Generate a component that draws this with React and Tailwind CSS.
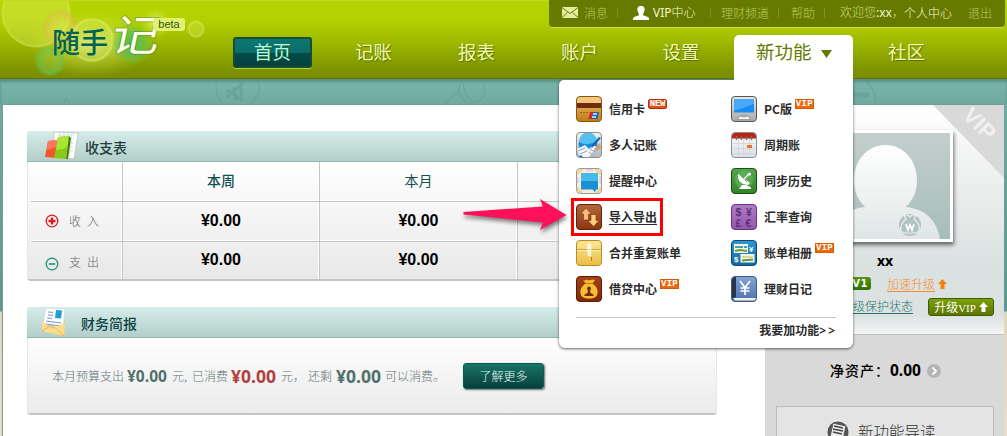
import React from 'react';

const CJK = "font-['Noto_Sans_CJK_SC',sans-serif]";

function Tile({ id, from, to, stroke, children }) {
  return (
    <svg width="26" height="26" viewBox="0 0 26 26" className="block shrink-0">
      <defs>
        <linearGradient id={id} x1="0" y1="0" x2="0" y2="1">
          <stop offset="0" stopColor={from} />
          <stop offset="1" stopColor={to} />
        </linearGradient>
        <clipPath id={id + '-clip'}>
          <rect x="1" y="1" width="24" height="24" rx="3" />
        </clipPath>
      </defs>
      <rect x="0.5" y="0.5" width="25" height="25" rx="3.5" fill={`url(#${id})`} />
      <g clipPath={`url(#${id}-clip)`}>{children}</g>
      <rect x="0.5" y="0.5" width="25" height="25" rx="3.5" fill="none" stroke={stroke} />
    </svg>
  );
}

const icons = {
  card: (
    <Tile id="card" from="#f3c777" to="#bd7b10" stroke="#8a5605">
      <rect width="26" height="7" fill="#f2c881" />
      <rect y="7" width="26" height="5" fill="#6d2c12" />
      <path d="M4 16.500h2M7 16.500h2M10 16.500h2" stroke="#94640f" />
      <path d="M14 16h5l-1.500 7h-5z" fill="#d8232a" />
      <path d="M17 16h6l-1.500 7h-6z" fill="#1c5fb4" />
      <path d="M17 18h4M16 21h4" stroke="#dff3fb" strokeWidth="1.500" />
    </Tile>
  ),
  people: (
    <Tile id="people" from="#f2f2f0" to="#a8bac3" stroke="#8e8e8e">
      <circle cx="12" cy="12" r="9.500" fill="#188bdc" />
      <path d="M3 10a9 9 0 0 1 18-1q-9 6-18 1" fill="#55c0ef" />
      <path d="M1 17l8-4 4 4 4-4 4 2-8 10H4z" fill="#f3f6f8" />
      <path d="M2 19l7-3M4 22l7-3M14 17l5 3M13 20l4 3" stroke="#8ea3b3" />
      <path d="M25 6l-8 9-2 1 1-3 7-8z" fill="#1a5fa5" />
      <path d="M24 11l-6 6 3 2 4-3z" fill="#d99c6c" />
      <path d="M2 25l3-2 2 2" fill="#287db8" />
    </Tile>
  ),
  remind: (
    <Tile id="remind" from="#fbf1e5" to="#f4ead7" stroke="#9a9a9a">
      <path d="M1 6l6-5M19 1l6 5M1 20l5 5M20 25l5-5" stroke="#f6d48e" strokeWidth="2.500" />
      <path d="M1.500 9v6M24.500 8v8M10 2h7" stroke="#e2cdee" strokeWidth="2.500" />
      <path d="M5 5h17v16.500h-2l-1 2.500-2.500-2.500H5z" fill="#1a91d4" />
      <path d="M5 5h17v8H5z" fill="#46b9e9" />
    </Tile>
  ),
  swap: (
    <Tile id="swap" from="#b4673c" to="#8a3510" stroke="#5e240b">
      <path d="M10 4l5.500 6h-3v6h-5v-6h-3z" fill="#f5bd74" stroke="#7b3414" strokeWidth=".6" />
      <path d="M17.500 22.500l-5.500-6h3v-6h5v6h3z" fill="#fbd07c" stroke="#7b3414" strokeWidth=".6" />
    </Tile>
  ),
  merge: (
    <Tile id="merge" from="#fbe898" to="#ebbc45" stroke="#b98d1d">
      <path d="M1 9.500h24" stroke="#cfa53b" />
      <path d="M1 10.500h24" stroke="#fff2b9" />
      <path d="M12 4.500h2.500v3H12zM12 8.500h2.500v3H12zM12.500 12h2v3.500h-2z" fill="none" stroke="#fffef0" strokeWidth="1.300" />
      <path d="M15.500 17v4" stroke="#ad8526" />
    </Tile>
  ),
  loan: (
    <Tile id="loan" from="#a54218" to="#822704" stroke="#5b1c06">
      <path d="M7 4q2 1 3-.5 3 1.500 6 0l3 .500-2.500 3.500h-7z" fill="#f3b82b" />
      <path d="M9 8h8c3 2 5 5 4.500 9s-3 5.500-8.500 5.500S5 21 4.500 17 6 10 9 8z" fill="#f5bf31" />
      <circle cx="13" cy="12.500" r="1.900" fill="#752d09" />
      <path d="M12 13h2l.5 4 3 1.500v1.500h-9v-1.500l3-1.500z" fill="#752d09" />
    </Tile>
  ),
  pc: (
    <Tile id="pc" from="#e8e8e8" to="#a9a9a9" stroke="#555">
      <rect x="3" y="3" width="20" height="13.500" fill="#168cf4" />
      <path d="M3 3h20v5L3 15z" fill="#4aa8f8" />
      <path d="M7 23.500q0-3 3-3.500h6q3 .5 3 3.500z" fill="#f7f7f7" stroke="#888" strokeWidth=".7" />
      <path d="M10 20q3 2 6 0" fill="none" stroke="#888" strokeWidth=".8" />
    </Tile>
  ),
  calendar: (
    <Tile id="calendar" from="#fcfcfc" to="#d9dde2" stroke="#8290a2">
      <rect width="26" height="6.500" fill="#b92514" />
      <path d="M2 11.500h22M2 16.500h22M2 21.500h22M7.500 8v15M12.500 8v15M18.500 8v15" stroke="#cfd2d7" strokeWidth=".8" />
      <path d="M5.500 4v4M10.500 4v4M15.500 4v4M20.500 4v4" stroke="#7a6b6b" strokeWidth="1.500" />
      <rect x="16" y="13" width="5" height="3" fill="#ef7421" />
    </Tile>
  ),
  sync: (
    <Tile id="sync" from="#53a84e" to="#328229" stroke="#174f14">
      <circle cx="13" cy="12" r="9" fill="#68b75f" opacity=".6" />
      <path d="M7 6q-1 10 10 11l2-2z" fill="#fff" />
      <path d="M10 8l6 6M13 10l5-5" stroke="#79ad70" strokeWidth="1" />
      <path d="M13 11l5-5" stroke="#fff" strokeWidth="1.200" />
      <circle cx="18.500" cy="6" r="1.500" fill="#fff" />
      <path d="M11 17l-3 4h12v-1.500l-5-2.500z" fill="#fff" />
    </Tile>
  ),
  rate: (
    <Tile id="rate" from="#b17bc5" to="#9456ae" stroke="#62377c">
      <g fill="#5d2f79" fontSize="10.500" fontWeight="bold" fontFamily="Liberation Sans">
        <text x="4.500" y="11.500">$</text>
        <text x="15" y="11.500">¥</text>
        <text x="4.500" y="22.500">£</text>
        <text x="14.500" y="22.500">€</text>
      </g>
    </Tile>
  ),
  album: (
    <Tile id="album" from="#2c9ad3" to="#1469a6" stroke="#0a4775">
      <rect x="3" y="4" width="14" height="9" fill="#f6f5e8" />
      <rect x="9.500" y="14" width="14" height="8.500" fill="#f6f5e8" />
      <path d="M4 7h8M13 7h3" stroke="#48a0b8" strokeWidth="2" />
      <path d="M4 11l5-1 7 1" stroke="#739b36" strokeWidth="2" />
      <path d="M11 17h11" stroke="#e1d38b" strokeWidth="2" />
      <path d="M11 20.500l11-1" stroke="#579650" strokeWidth="2" />
      <text x="18" y="12" fill="#fff" fontSize="8" fontWeight="bold" fontFamily="Liberation Sans">¥</text>
      <text x="3" y="22" fill="#fff" fontSize="8" fontWeight="bold" fontFamily="Liberation Sans">$</text>
    </Tile>
  ),
  diary: (
    <Tile id="diary" from="#83a5d4" to="#4c73ab" stroke="#435d87">
      <path d="M0 0h5v21l-4 2z" fill="#26364c" />
      <path d="M2 22h23v2.500H4z" fill="#f2f1ea" />
      <path d="M9 5l5 6.500L19 5M14 11v8M9.500 12h9M9.500 15h9" fill="none" stroke="#fff" strokeWidth="1.700" />
    </Tile>
  ),
};

function Tag({ kind }) {
  if (kind === 'NEW') {
    return (
      <span className="ml-[3px] mt-[3px] flex h-[10px] w-[19px] items-center justify-center rounded-[2px] border border-[#b92c0c] bg-[#e0511c] font-['Liberation_Mono',monospace] text-[9px] leading-[8px] font-bold tracking-[-0.2px] text-white">
        NEW
      </span>
    );
  }
  return (
    <span className="ml-[3px] mt-[3px] flex h-[10px] w-[19px] items-center justify-center border border-[#d55a09] bg-[#ea6a0c] font-['Liberation_Mono',monospace] text-[9px] leading-[8px] font-bold tracking-[0.3px] text-white">
      VIP
    </span>
  );
}

function MenuItem({ icon, label, tag, underline }) {
  return (
    <div className="flex h-[26px]">
      {icons[icon]}
      <span
        className={`ml-[7px] h-[26px] text-[12px] leading-[25px] font-bold whitespace-nowrap text-[#2b2b2b] ${underline ? 'underline underline-offset-2' : ''}`}
      >
        {label}
      </span>
      {tag && <Tag kind={tag} />}
    </div>
  );
}

const menuLeft = [
  { icon: 'card', label: '信用卡', tag: 'NEW' },
  { icon: 'people', label: '多人记账' },
  { icon: 'remind', label: '提醒中心' },
  { icon: 'swap', label: '导入导出', underline: true },
  { icon: 'merge', label: '合并重复账单' },
  { icon: 'loan', label: '借贷中心', tag: 'VIP' },
];

const menuRight = [
  { icon: 'pc', label: 'PC版', tag: 'VIP' },
  { icon: 'calendar', label: '周期账' },
  { icon: 'sync', label: '同步历史' },
  { icon: 'rate', label: '汇率查询' },
  { icon: 'album', label: '账单相册', tag: 'VIP' },
  { icon: 'diary', label: '理财日记' },
];

function Dropdown() {
  return (
    <div className="absolute top-[80px] left-[559px] z-20 flex h-[268px] w-[294px] flex-col rounded-b-[6px] rounded-tl-[5px] bg-white px-[17px] pt-[16px] shadow-[0_1px_3px_rgba(0,0,0,0.6)]">
      <div className="flex h-[222px] border-b border-[#c5c5c5]">
        <div className="flex w-[155px] flex-col gap-[10px]">
          {menuLeft.map((m) => <MenuItem key={m.label} {...m} />)}
        </div>
        <div className="flex flex-col gap-[10px]">
          {menuRight.map((m) => <MenuItem key={m.label} {...m} />)}
        </div>
      </div>
      <div className="text-right text-[12px] leading-[23px] font-bold text-[#2b2b2b]">
        我要加功能<span className="font-['Noto_Sans'] tracking-[2px] font-semibold">&gt;</span><span className="font-['Noto_Sans'] tracking-[1px] font-semibold">&gt;</span>
      </div>
    </div>
  );
}

function Annotation() {
  return (
    <>
      <div className="absolute top-[198px] left-[571px] z-30 h-[38px] w-[92px] border-[3px] border-[#fe0000]" />
      <svg className="absolute top-[194px] left-[458px] z-30 overflow-visible drop-shadow-[1px_3px_2px_rgba(0,0,0,0.5)]" width="112" height="42">
        <path d="M5.500 18L85 12.500 82 5l26.500 16L82 36l3-7.500L5.500 20.500z" fill="#ff1059" />
      </svg>
    </>
  );
}

function Logo() {
  return (
    <div className="relative h-[77px] w-[232px] shrink-0">
      <svg width="232" height="77" className="block">
        <defs>
          <radialGradient id="glow">
            <stop offset="0" stopColor="#effa9d" stopOpacity=".7" />
            <stop offset="1" stopColor="#d8ec35" stopOpacity="0" />
          </radialGradient>
          <radialGradient id="ringgreen">
            <stop offset=".2" stopColor="#9ed04b" stopOpacity=".35" />
            <stop offset=".75" stopColor="#6cc352" stopOpacity=".65" />
            <stop offset="1" stopColor="#6cc352" stopOpacity="0" />
          </radialGradient>
          <radialGradient id="discgreen">
            <stop offset="0" stopColor="#4dbb58" stopOpacity=".9" />
            <stop offset=".6" stopColor="#5dbd50" stopOpacity=".7" />
            <stop offset="1" stopColor="#6cc352" stopOpacity="0" />
          </radialGradient>
          <radialGradient id="ringorange">
            <stop offset=".2" stopColor="#ddea59" stopOpacity=".3" />
            <stop offset=".8" stopColor="#e2b94b" stopOpacity=".5" />
            <stop offset="1" stopColor="#e2b23b" stopOpacity="0" />
          </radialGradient>
        </defs>
        <circle cx="36" cy="12" r="33.500" fill="#e5f169" fillOpacity=".35" stroke="#e3ee69" strokeOpacity=".35" strokeWidth="2.500" />
        <ellipse cx="90" cy="43" rx="62" ry="34" fill="url(#glow)" />
        <circle cx="61" cy="27" r="19" fill="url(#ringorange)" />
        <circle cx="92" cy="39" r="20.500" fill="#e7f486" fillOpacity=".2" stroke="#e5f082" strokeOpacity=".45" strokeWidth="2.500" />
        <circle cx="50" cy="60" r="16" fill="url(#ringgreen)" />
        <circle cx="132" cy="43" r="21" fill="url(#discgreen)" />
        <circle cx="156" cy="22" r="16" fill="url(#glow)" />
        <circle cx="196" cy="28" r="7.500" fill="#dfef60" fillOpacity=".3" stroke="#e0ee67" strokeOpacity=".4" strokeWidth="2.500" />
        <text x="52" y="52" fill="#006256" fontSize="28" fontWeight="500" fontFamily="Noto Sans CJK SC" textLength="56">随手</text>
        <g transform="translate(109 50) skewX(-12) scale(1.120 1)">
          <text fill="#fdffe8" stroke="#39763e" strokeOpacity=".4" strokeWidth="2" paintOrder="stroke" fontSize="43" fontWeight="400" fontFamily="Noto Sans CJK SC">记</text>
        </g>
      </svg>
      <span className="absolute top-[17px] left-[153px] h-[13px] w-[32px] rounded-[3px] bg-[#e0f174] text-center font-['Liberation_Sans',sans-serif] text-[11px] leading-[13px] text-[#33560b]">
        beta
      </span>
    </div>
  );
}

function TopBar() {
  return (
    <div className="absolute -top-px left-[549px] flex h-[28px] w-[456px] items-center rounded-b-[4px] border-b border-[#cbe052] bg-[#667a00] pb-[2px] pl-[13px] text-[12px] leading-[24px] font-light whitespace-nowrap text-[#b9ca5e]">
      <svg width="16" height="11" viewBox="0 0 16 11" className="shrink-0">
        <rect width="16" height="11" fill="#e4ee9e" />
        <path d="M0 .5l8 6 8-6M0 10.500l5.500-5M16 10.500l-5.500-5" fill="none" stroke="#667a00" />
      </svg>
      <span className="ml-[6px] w-[33px]">消息</span>
      <span className="h-[10px] w-px bg-[#7f9127]" />
      <svg width="16" height="14" viewBox="0 0 16 14" className="ml-[15px] shrink-0">
        <path d="M8 0c3 0 4 2 3.500 4.500C11 6.500 10 7.500 10 9c1 1 5 1.500 6 3v2H0v-2c1-1.500 5-2 6-3 0-1.500-1-2.500-1.500-4.500C4 2 5 0 8 0z" fill="#fff" />
      </svg>
      <span className="ml-[4px] w-[57px] text-[#f3f8cd]"><span className="font-['Noto_Sans'] font-normal">VIP</span>中心</span>
      <span className="h-[10px] w-px bg-[#7f9127]" />
      <span className="ml-[10px] w-[57px]">理财频道</span>
      <span className="h-[10px] w-px bg-[#7f9127]" />
      <span className="ml-[12px] w-[33px]">帮助</span>
      <span className="h-[10px] w-px bg-[#7f9127]" />
      <span className="ml-[15px] w-[64px] text-[#cfdd7a]">欢迎您<span className="font-['Noto_Sans'] font-normal text-[#f3f8cd]">:xx</span>，</span>
      <span className="w-[64px] text-[#f3f8cd]">个人中心</span>
      <span>退出</span>
    </div>
  );
}

function Header() {
  return (
    <header className="relative z-30 flex h-[79px] shrink-0 border-t border-b border-t-[#bfd625] border-b-[#5d7000] bg-[linear-gradient(180deg,#b5d300_0%,#b3d100_25%,#a0bc00_50%,#7b9100_92%,#7b8e00_100%)]">
      <Logo />
      <TopBar />
      <nav className="flex items-start pt-[34px] text-[18.500px] leading-[32px] font-normal text-[#eff9b1] [text-shadow:1px_1px_1px_rgba(70,90,0,0.7)]">
        <div className="mt-[2px] mr-[11px] ml-px flex h-[31px] w-[79px] justify-center rounded-[3px] border-2 border-[#174e30] bg-[linear-gradient(180deg,#0d7772_0%,#0b6d69_50%,#024c4c_51%,#06403f_100%)] text-[#a8fff0] shadow-[0_1px_0_#b7cf3c]">
          <span className="h-[27px] leading-[25px]">首页</span>
        </div>
        <span className="w-[101px] text-center">记账</span>
        <span className="w-[105px] text-center">报表</span>
        <span className="w-[101px] text-center">账户</span>
        <span className="w-[102px] text-center">设置</span>
        <div className="ml-[2px] flex h-[46px] w-[119px] items-start rounded-t-[5px] bg-white pl-[22px] text-[#647900] [text-shadow:none]">
          <span className="leading-[32px]">新功能</span>
          <svg width="11" height="8" viewBox="0 0 11 8" className="ml-[9px] mt-[15px]"><path d="M0 0h11L5.500 8z" fill="#647900" /></svg>
        </div>
        <span className="w-[107px] text-center">社区</span>
      </nav>
    </header>
  );
}

function PanelHead({ icon, title, className }) {
  return (
    <div className="flex h-[31px] items-center rounded-t-[3px] border-b border-[#94b5b2] bg-[linear-gradient(180deg,#d5ece9,#b3cfca)]">
      {icon}
      <h2 className={`${className} text-[14px] leading-[30px] font-medium`}>{title}</h2>
    </div>
  );
}

const chartIcon = (
  <svg width="36" height="30" viewBox="0 0 36 30" className="ml-[16px] shrink-0">
    <path d="M11 1l24 1-4 26-20-2z" fill="#fff" stroke="#b4bdbc" strokeWidth=".7" />
    <path d="M14 4h18M14 8h17M14 12h17M27 16h3M26 20h4M17 2v8M21 2v8M25 2v8M29 2l-3 24" stroke="#cbd4d3" strokeWidth=".7" />
    <path d="M5 10l9-1-1 18-11-1z" fill="#f2552f" />
    <path d="M5 10l9-1-1 7-9 3z" fill="#ff785b" />
    <path d="M15 6l11-1-3 23-12-1z" fill="#87ca15" />
    <path d="M15 6l11-1-1 10q-5 4-12 4z" fill="#a9e534" />
    <path d="M26 5l2 2-3 21h-2z" fill="#437c0a" />
  </svg>
);

const mailIcon = (
  <svg width="26" height="30" viewBox="0 0 26 30" className="ml-[14px] shrink-0">
    <path d="M2 14L22 16l2-3-1 16L1 24z" fill="#eec269" />
    <path d="M5 1l19 1-2 20L2 17z" fill="#fff" stroke="#c8d5da" strokeWidth=".6" />
    <path d="M15 3l6 .5-1 8-6-.5z" fill="#1a9fd9" />
    <path d="M7 5l5 .4M7 8l5 .4M6 11l5 .4M5 14l15 2M5 17l14 2" stroke="#7694b8" />
    <path d="M1 14l10 7.500L24 16l-1 13L1 24z" fill="#fbdd8b" />
    <path d="M1 24l10-6 12 11" fill="none" stroke="#d6a850" strokeWidth=".8" />
  </svg>
);

const plusIcon = (
  <svg width="14" height="14" viewBox="0 0 14 14" className="mr-[10px]">
    <circle cx="7" cy="7" r="5.800" fill="none" stroke="#df1c20" strokeWidth="1.300" />
    <path d="M7 3.500v7M3.500 7h7" stroke="#df1c20" strokeWidth="2.400" />
  </svg>
);

const minusIcon = (
  <svg width="14" height="14" viewBox="0 0 14 14" className="mt-[5px] mr-[10px]">
    <circle cx="7" cy="7" r="5.800" fill="none" stroke="#19937e" strokeWidth="1.300" />
    <path d="M3.800 7h6.400" stroke="#19937e" strokeWidth="1.600" />
  </svg>
);

const rowLine = 'border-b border-[#c5c5c5] shadow-[inset_0_-1px_0_#fff]';
const cell = 'flex items-center justify-center border-l border-[#c5c5c5] pb-[2px] shadow-[-1px_0_0_#fff]';
const amount = "font-['Liberation_Sans',sans-serif] text-[16px] font-bold text-black";

function BalanceTable() {
  return (
    <section className="h-[150px] w-[690px] rounded-[4px] border-b-2 border-[#c3c3c3]">
      <PanelHead icon={chartIcon} title="收支表" className="ml-[6px] pt-[2px] text-[#26403e]" />
      <div className="h-[117px] border-x border-[#e5e5e5] bg-[linear-gradient(180deg,#fff,#e8e8e8)] pl-[3px]">
        <div className={`grid h-[40px] grid-cols-[91px_197px_198px_1fr] ${rowLine}`}>
          <span />
          <span className={`${cell} text-[14px] font-medium text-[#124f50]`}>本周</span>
          <span className={`${cell} text-[14px] font-normal text-[#124f50]`}>本月</span>
          <span className={cell} />
        </div>
        <div className={`grid h-[40px] grid-cols-[91px_197px_198px_1fr] ${rowLine}`}>
          <span className="flex items-center pb-[2px] pl-[14px] text-[12px] font-light text-[#666]">{plusIcon}收<span className="w-[6px]" />入</span>
          <span className={cell}><b className={amount}>¥0.00</b></span>
          <span className={cell}><b className={amount}>¥0.00</b></span>
          <span className={cell} />
        </div>
        <div className="grid h-[37px] grid-cols-[91px_197px_198px_1fr]">
          <span className="flex items-center pt-[2px] pl-[14px] text-[12px] font-light text-[#666]">{minusIcon}支<span className="w-[6px]" />出</span>
          <span className={cell}><b className={amount}>¥0.00</b></span>
          <span className={cell}><b className={amount}>¥0.00</b></span>
          <span className={cell} />
        </div>
      </div>
    </section>
  );
}

function Briefing() {
  return (
    <section className="mt-[26px] h-[108px] w-[690px] rounded-[4px] border-b-2 border-[#c3c3c3]">
      <PanelHead icon={mailIcon} title="财务简报" className="ml-[14px] pt-[2px] text-[#0d4544]" />
      <div className="flex h-[75px] items-center border-x border-[#e8e8e8] bg-[linear-gradient(180deg,#fefefe,#ebebeb)] pt-px pl-[24px] text-[12px] leading-[20px] font-light whitespace-nowrap text-[#627478]">
        <span className="w-[75px]">本月预算支出</span>
        <b className="w-[45px] font-['Open_Sans'] text-[15.500px] font-bold text-[#50706d]">¥0.00</b>
        <span className="w-[20px]">元,</span>
        <span className="w-[39px]">已消费</span>
        <b className="w-[50px] font-['Open_Sans'] text-[17.500px] font-bold text-[#b1413e]">¥0.00</b>
        <span className="w-[27px]">元，</span>
        <span className="w-[28px]">还剩</span>
        <b className="w-[49px] font-['Open_Sans'] text-[17.500px] font-bold text-[#50706d]">¥0.00</b>
        <span className="w-[78px]">可以消费。</span>
        <button className="h-[26px] w-[81px] rounded-[3px] border border-[#0b5951] bg-[linear-gradient(180deg,#187468,#083f3b)] text-[12px] leading-[24px] font-light text-[#e0f3ef] shadow-[1px_1px_2px_rgba(0,0,0,0.55)]">
          了解更多
        </button>
      </div>
    </section>
  );
}

function UpArrow({ fill }) {
  return (
    <svg width="9" height="10" viewBox="0 0 9 10" className="shrink-0">
      <path d="M4.500 0L9 5H6.500v5h-4V5H0z" fill={fill} />
    </svg>
  );
}

function Sidebar() {
  return (
    <aside className="relative flex w-[239px] shrink-0 flex-col bg-[#d9d9d9]">
      <div className="h-[230px] shrink-0 border-b border-[#c2c2c2] bg-[linear-gradient(180deg,#ffffff_0%,#eff0f0_30%,#dae1e0_70%,#dce2e2_92%,#f4f5f5_100%)] pt-[25px]">
        <svg className="absolute top-0 right-0" width="71" height="73" viewBox="0 0 71 73">
          <path d="M0 0h71v73z" fill="#d9d9d9" />
          <text transform="translate(28.500 11.500) rotate(45)" fill="#f1f1f1" fontSize="22" fontWeight="bold" fontFamily="Liberation Sans" textLength="36">VIP</text>
        </svg>
        <div className="ml-[52px] h-[112px] w-[136px] border-[3px] border-white shadow-[1px_3px_4px_rgba(0,0,0,0.55)]">
          <svg width="130" height="106" viewBox="0 0 130 106" className="block">
            <defs>
              <linearGradient id="photo" x1="0" y1="0" x2="0" y2="1"><stop offset="0" stopColor="#c3cecc" /><stop offset="1" stopColor="#a6beba" /></linearGradient>
              <linearGradient id="person" x1="0" y1="0" x2="0" y2="1"><stop offset="0" stopColor="#fff" /><stop offset="1" stopColor="#dfe6e5" /></linearGradient>
            </defs>
            <rect width="130" height="106" fill="url(#photo)" />
            <path d="M65.500 12C84 12 97 28 97 47c0 12-4 20-11 27 20 2 31 14 34 32H11c3-18 14-30 34-32C38 67 34 59 34 47c0-19 13-35 31.500-35z" fill="url(#person)" />
            <circle cx="90" cy="92" r="11" fill="#b1c3c0" />
            <path d="M86 86c-5 4-6 8-5 12 2 3 16 3 18 0 1-4 0-8-5-12l2-4h-4l-2 2-2-2h-4z" fill="none" stroke="#edf2f1" strokeWidth="1.200" />
            <path d="M86 91l2 6 2-5 2 5 2-6" fill="none" stroke="#fff" strokeWidth="1.800" />
          </svg>
        </div>
        <div className="h-[35px] pl-px text-center font-['Noto_Sans'] text-[14px] leading-[38px] font-bold text-black">xx</div>
        <div className="flex h-[13px] items-center pl-[84px] text-[12px] font-light whitespace-nowrap">
          <span className="h-[13px] w-[22px] rounded-[3px] bg-[linear-gradient(180deg,#52960b,#2d7204)] text-center font-['DejaVu_Sans'] text-[10px] leading-[13px] font-bold tracking-[0.5px] text-white">V1</span>
          <a className="ml-[16px] mr-[3px] leading-[14px] font-light text-[#f68b32] underline underline-offset-2">加速升级</a>
          <UpArrow fill="#f5820b" />
        </div>
        <div className="mt-[8px] flex h-[18px] items-center pl-[88px] text-[12px] whitespace-nowrap">
          <a className="mb-[2px] w-[75px] leading-[14px] font-light text-[#24776f] underline underline-offset-2">级保护状态</a>
          <button className="flex h-[18px] w-[66px] items-center justify-center gap-[3px] rounded-[3px] border border-[#3a5d08] bg-[linear-gradient(180deg,#7f9f08,#5d7600)] text-[12px] leading-[16px] font-normal text-white">
            <span>升级<span className="font-['Liberation_Serif'] text-[11px]">VIP</span></span>
            <UpArrow fill="#fff" />
          </button>
        </div>
      </div>
      <div className="flex h-[71px] shrink-0 items-center pl-[65px] text-[14px] font-medium whitespace-nowrap text-black">
        <span className="w-[60px] tracking-[1px]">净资产：</span>
        <b className="w-[37px] font-['Noto_Sans'] text-[15.500px] font-bold">0.00</b>
        <svg width="14" height="14" viewBox="0 0 14 14"><circle cx="7" cy="7" r="7" fill="#b5b5b5" /><path d="M5.500 3.500L9 7l-3.500 3.500" fill="none" stroke="#fff" strokeWidth="1.800" /></svg>
      </div>
      <div className="ml-[11px] flex h-[60px] w-[218px] shrink-0 border border-[#bdbdbd] bg-[#e4e4e4] pt-[13px] pl-[50px]">
        <svg width="22" height="22" viewBox="0 0 22 22" className="mt-[1px]">
          <circle cx="11" cy="11" r="10.500" fill="#555" />
          <path d="M6 2l13 3-3 14L3 16z" fill="#eee" stroke="#555" />
          <path d="M7 5l9 2M6 8l10 2M6 11l9 2" stroke="#444" strokeWidth="1.400" />
        </svg>
        <span className="ml-[9px] text-[15.500px] leading-[23px] font-light whitespace-nowrap text-[#333]">新功能导读</span>
      </div>
    </aside>
  );
}

function Doodles() {
  return (
    <svg width="1007" height="25" className="block shrink-0" fill="none" stroke="#5d9b91" strokeWidth="1.200" opacity=".5">
      <path d="M218 0c-5 10 0 22 8 28M257 0c6 10 0 20-8 26M62 28l4-9 6 9" />
      <path d="M227 11l16 11M243 4l-16 14M234 8l2 14M240 5l2 14" strokeWidth="3" />
      <circle cx="472" cy="11" r="13" />
      <path d="M459 12l-16 14M463 1q0 15 10 22M862 0q14 8 14 26" />
      <path d="M853 16h16" strokeWidth="5" />
    </svg>
  );
}

export default function App() {
  return (
    <div className={`relative flex h-[436px] w-[1007px] flex-col overflow-hidden bg-[linear-gradient(180deg,#7bb6ac_79px,#6ca99e_105px,#5d988e_311px,#e1d6be_312px,#e7dfca_436px)] ${CJK}`}>
      <Header />
      <div className="h-[25px] shrink-0 shadow-[inset_0_3px_3px_rgba(40,90,70,0.4)]"><Doodles /></div>
      <div className="ml-[2px] flex h-[332px] w-[1003px] shrink-0 border-t border-l border-[#7b9995]">
        <main className="w-[762px] shrink-0 bg-white pt-[26px] pl-[24px]">
          <BalanceTable />
          <Briefing />
        </main>
        <Sidebar />
      </div>
      <Dropdown />
      <Annotation />
    </div>
  );
}
